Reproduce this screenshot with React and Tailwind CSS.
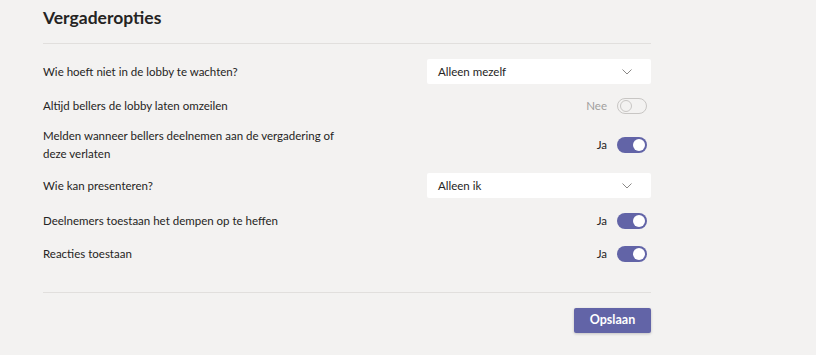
import React, { useState } from 'react';

const font = { fontFamily: 'Lato, "Noto Sans", sans-serif' };

function Chevron() {
    return (
        <svg width="10" height="6" viewBox="0 0 10 6" className="text-[#8a8886]">
            <path d="M0.5 0.5 L5 5 L9.5 0.5" fill="none" stroke="currentColor" strokeWidth="1" />
        </svg>
    );
}

function Dropdown({ value }) {
    return (
        <div className="w-[224px] h-[25px] bg-white rounded-[2px] flex items-center justify-between pl-[11px] pr-[19px] text-[11.5px] text-[#252423]">
            <span>{value}</span>
            <Chevron />
        </div>
    );
}

function Toggle({ on, onChange }) {
    return (
        <div className="flex items-center gap-[10px] mr-[4px]">
            <span className={`text-[11.5px] ${on ? 'text-[#252423]' : 'text-[#a19f9d]'}`}>{on ? 'Ja' : 'Nee'}</span>
            <button
                onClick={onChange}
                className={`w-[30px] h-[16px] rounded-full flex items-center px-[2px] ${on ? 'bg-[#6264a7] justify-end' : 'border border-[#c8c6c4] bg-transparent justify-start'}`}
            >
                <span className={`w-[12px] h-[12px] rounded-full ${on ? 'bg-white' : 'border border-[#c8c6c4]'}`}></span>
            </button>
        </div>
    );
}

export default function App() {
    const [toggles, setToggles] = useState({ callers: false, announce: true, mute: true, reactions: true });
    const flip = (key) => setToggles({ ...toggles, [key]: !toggles[key] });

    return (
        <div className="w-[816px] h-[355px] bg-[#f3f2f1] overflow-hidden text-[#252423]" style={font}>
            <div className="w-[608px] ml-[43px] flex flex-col">
                <h1 className="text-[17.5px] font-bold leading-[28px] pt-[4px] pb-[11px] border-b border-[#e1dfdd]">Vergaderopties</h1>

                {/* Lobby */}
                <div className="mt-[15px] h-[25px] flex items-center justify-between text-[11.5px]">
                    <span>Wie hoeft niet in de lobby te wachten?</span>
                    <Dropdown value="Alleen mezelf" />
                </div>

                <div className="mt-[12px] h-[20px] flex items-center justify-between text-[11.5px]">
                    <span>Altijd bellers de lobby laten omzeilen</span>
                    <Toggle on={toggles.callers} onChange={() => flip('callers')} />
                </div>

                <div className="mt-[11px] h-[36px] flex items-center justify-between text-[11.5px]">
                    <span className="leading-[18px]">Melden wanneer bellers deelnemen aan de vergadering of<br />deze verlaten</span>
                    <Toggle on={toggles.announce} onChange={() => flip('announce')} />
                </div>

                {/* Presenters */}
                <div className="mt-[10px] h-[25px] flex items-center justify-between text-[11.5px]">
                    <span>Wie kan presenteren?</span>
                    <Dropdown value="Alleen ik" />
                </div>

                <div className="mt-[13px] h-[20px] flex items-center justify-between text-[11.5px]">
                    <span>Deelnemers toestaan het dempen op te heffen</span>
                    <Toggle on={toggles.mute} onChange={() => flip('mute')} />
                </div>

                <div className="mt-[13px] h-[20px] flex items-center justify-between text-[11.5px]">
                    <span>Reacties toestaan</span>
                    <Toggle on={toggles.reactions} onChange={() => flip('reactions')} />
                </div>

                <div className="mt-[28px] border-t border-[#e1dfdd]"></div>

                <div className="mt-[15px] flex justify-end">
                    <button className="w-[77px] h-[25px] bg-[#6264a7] text-white text-[12.5px] font-bold rounded-[2px] shadow-[0_1px_3px_rgba(0,0,0,0.2)]">
                        Opslaan
                    </button>
                </div>
            </div>
        </div>
    );
}
